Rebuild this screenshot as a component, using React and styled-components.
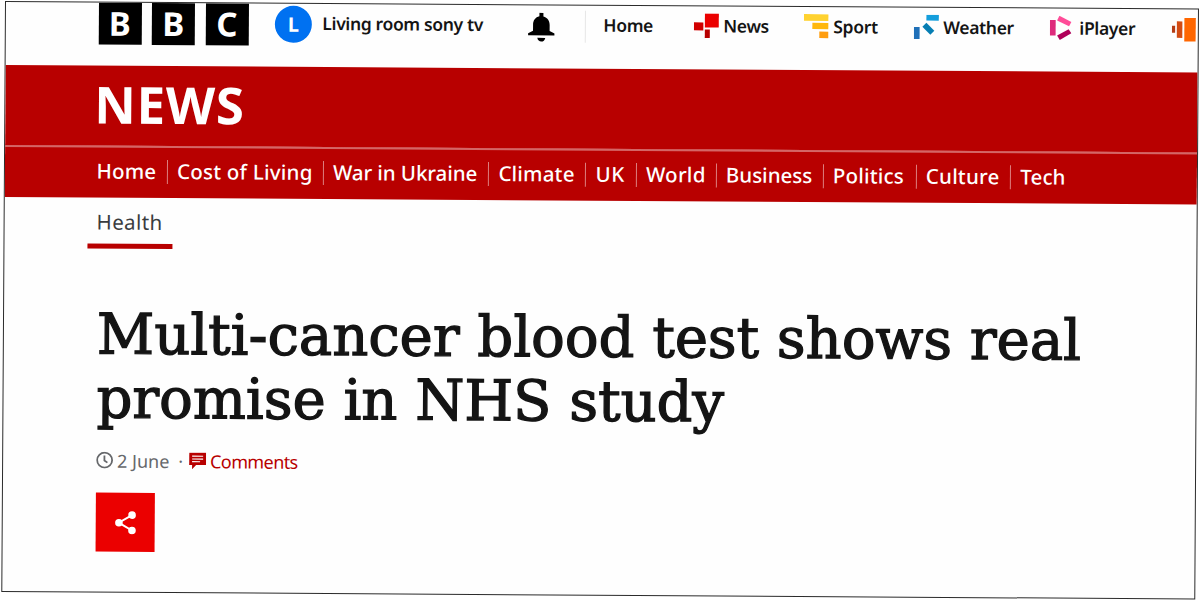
import styled, { createGlobalStyle } from 'styled-components';

const SERVICES = [
  { name: 'Home', width: 90 },
  { name: 'News', width: 110, icon: NewsIcon },
  { name: 'Sport', width: 110, icon: SportIcon },
  { name: 'Weather', width: 136, icon: WeatherIcon },
  { name: 'iPlayer', width: 122, icon: PlayerIcon },
];

const SECTIONS = [
  { name: 'Home', width: 70, tracking: 0.2 },
  { name: 'Cost of Living', width: 156, tracking: 0.25 },
  { name: 'War in Ukraine', width: 165.5, tracking: -0.05 },
  { name: 'Climate', width: 97, tracking: 0.2 },
  { name: 'UK', width: 50.5, tracking: 0.8 },
  { name: 'World', width: 80, tracking: 0.3 },
  { name: 'Business', width: 107, tracking: 0 },
  { name: 'Politics', width: 93, tracking: 0.2 },
  { name: 'Culture', width: 94.5, tracking: 0.2 },
  { name: 'Tech', width: 60, tracking: 0.1 },
];

export default function App() {
  return (
    <>
      <GlobalStyle />
      <Frame>
        <TopBar>
          <Brand>
            <BrandBlock>B</BrandBlock>
            <BrandBlock>B</BrandBlock>
            <BrandBlock>C</BrandBlock>
          </Brand>
          <Account>
            <Avatar>L</Avatar>
            <AccountName>Living room sony tv</AccountName>
          </Account>
          <Notifications>
            <BellIcon />
          </Notifications>
          <Services>
            {SERVICES.map(({ name, width, icon: Icon }) => (
              <Service key={name} $width={width}>
                {Icon && (
                  <ServiceIcon>
                    <Icon />
                  </ServiceIcon>
                )}
                {name}
              </Service>
            ))}
            <SoundsIcon />
          </Services>
        </TopBar>
        <Masthead>NEWS</Masthead>
        <SectionNav>
          {SECTIONS.map(({ name, width, tracking }) => (
            <Section key={name} $width={width} $tracking={tracking}>
              {name}
            </Section>
          ))}
        </SectionNav>
        <Article>
          <Topic>Health</Topic>
          <Headline>
            <span>Multi-cancer blood test shows real</span>
            <span>promise in NHS study</span>
          </Headline>
          <Meta>
            <ClockIcon />
            <PostDate>2 June</PostDate>
            <Dot>·</Dot>
            <CommentIcon />
            <Comments>Comments</Comments>
          </Meta>
          <ShareButton aria-label="Share">
            <ShareIcon />
          </ShareButton>
        </Article>
      </Frame>
    </>
  );
}

function BellIcon() {
  return (
    <svg width="27" height="30" viewBox="0 0 27 30">
      <path
        d="M11.5 0.500h4v3.500c4 1 6.300 4 6.300 8.500v6l4.900 2.500v2H.3v-2l4.900-2.500v-6C5.200 8 7.500 5 11.500 4z"
        fill="#000"
      />
      <path d="M9.500 25.500h8c-.5 2.500-2 3.700-4 3.700s-3.500-1.200-4-3.700z" fill="#000" />
    </svg>
  );
}

function NewsIcon() {
  return (
    <svg width="25" height="25" viewBox="0 0 25 25">
      <rect x="11" y="0" width="14" height="14" fill="#eb0000" />
      <rect x="0" y="9" width="9.500" height="8" fill="#d10000" />
      <rect x="11" y="16" width="5" height="8.500" fill="#b80000" />
    </svg>
  );
}

function SportIcon() {
  return (
    <svg width="25" height="25" viewBox="0 0 25 25">
      <rect x="0" y="0" width="24.500" height="6.800" fill="#ffd230" />
      <rect x="8.500" y="8.800" width="16" height="6.200" fill="#ffb80c" />
      <rect x="15.500" y="17.500" width="9" height="6.500" fill="#ff9e0f" />
    </svg>
  );
}

function WeatherIcon() {
  return (
    <svg width="25" height="25" viewBox="0 0 25 25">
      <rect x="12.500" y="0" width="12.500" height="5.800" fill="#149edc" />
      <path d="M12.500 8l8 8-4 4L8.500 12z" fill="#067eb3" />
      <rect x="0" y="12.200" width="5.800" height="12" fill="#1f70b8" />
    </svg>
  );
}

function PlayerIcon() {
  return (
    <svg width="22" height="25" viewBox="0 0 22 25">
      <rect x="0" y="4.500" width="5.800" height="15.500" fill="#de2b7c" />
      <path d="M9.500 0l12 6.300-2.300 4.200L7.200 4.800z" fill="#ff4c98" />
      <path d="M21.500 17.500L10 24.300 7.300 20l11.500-6.500z" fill="#b0005a" />
    </svg>
  );
}

function SoundsIcon() {
  return (
    <svg width="24" height="25" viewBox="0 0 24 25">
      <rect x="0" y="8.500" width="3.300" height="7" fill="#b33c15" />
      <rect x="5" y="4" width="5.500" height="16.500" fill="#d34b12" />
      <rect x="12.500" y="0.500" width="11.500" height="23.500" fill="#ff6600" />
    </svg>
  );
}

function ClockIcon() {
  return (
    <svg width="17" height="17" viewBox="0 0 17 17" fill="none" stroke="#66686b" strokeWidth="1.800">
      <circle cx="8.500" cy="8.500" r="7.500" />
      <path d="M8.300 3.800v5l3 2.200" />
    </svg>
  );
}

function CommentIcon() {
  return (
    <svg width="17" height="17" viewBox="0 0 17 17">
      <path d="M0 .5h17v12.300H7L3 17v-4.200H0z" fill="#b80000" />
      <path d="M3 4h11M3 6.800h11M3 9.500h8" stroke="#fff" strokeWidth="1.200" />
    </svg>
  );
}

function ShareIcon() {
  return (
    <svg width="22" height="24" viewBox="0 0 22 24">
      <path d="M17.300 4.300L4 12l13.300 7.700" fill="none" stroke="#fff" strokeWidth="2" />
      <circle cx="17.300" cy="4.300" r="3.800" fill="#fff" />
      <circle cx="4.200" cy="12" r="3.800" fill="#fff" />
      <circle cx="17.300" cy="19.700" r="3.800" fill="#fff" />
    </svg>
  );
}

const GlobalStyle = createGlobalStyle`
  * {
    box-sizing: border-box;
  }

  body {
    height: 100vh;
    margin: 0;
    overflow: hidden;
    background: #fff;
    font-family: 'Noto Sans', 'Open Sans', sans-serif;
  }

  #root {
    display: flow-root;
    height: 100%;
  }

  svg {
    display: block;
    flex-shrink: 0;
  }
`;

/* the sheet lies slightly turned on the page */
const Frame = styled.main`
  width: 1193.5px;
  height: 591px;
  margin: 1px 0 0 5px;
  overflow: hidden;
  border: 1px solid #2b2b2b;
  background: #fefefe;
  transform: rotate(0.36deg);
  transform-origin: 0 0;
`;

const TopBar = styled.header`
  display: flex;
  align-items: center;
  height: 63px;
  padding: 0 0 22px 92.500px;
`;

const Brand = styled.div`
  display: flex;
  gap: 10.500px;
  width: 176.500px;
`;

const BrandBlock = styled.span`
  display: flex;
  justify-content: center;
  align-items: center;
  width: 43px;
  height: 42px;
  background: #000;
  color: #fff;
  font-size: 33px;
  font-weight: 700;
  line-height: 41px;
`;

const Account = styled.div`
  display: flex;
  align-items: center;
  gap: 10.500px;
  width: 253px;
`;

const Avatar = styled.span`
  width: 37px;
  height: 37px;
  border-radius: 50%;
  background: #0071f1;
  color: #fff;
  font-size: 20px;
  font-weight: 700;
  line-height: 37px;
  text-align: center;
`;

const AccountName = styled.span`
  padding-bottom: 3px;
  color: #141414;
  font-size: 17.500px;
  font-weight: 600;
  letter-spacing: -0.350px;
  white-space: nowrap;
`;

const Notifications = styled.div`
  width: 57px;
  padding-top: 2px;
`;

const Services = styled.nav`
  display: flex;
  align-items: center;
  height: 32px;
  padding-left: 17.500px;
  border-left: 1px solid #e6e6e6;
`;

const Service = styled.a`
  display: flex;
  flex-shrink: 0;
  align-items: center;
  width: ${({ $width }) => $width}px;
  padding-bottom: 3px;
  color: #141414;
  font-size: 17.500px;
  font-weight: 600;
  letter-spacing: -0.350px;
`;

const ServiceIcon = styled.span`
  width: 30px;
`;

const Masthead = styled.div`
  height: 80px;
  padding-left: 89px;
  background: #b80000;
  color: #fff;
  font-size: 51px;
  font-weight: 700;
  letter-spacing: 0.700px;
  line-height: 76px;
`;

const SectionNav = styled.nav`
  display: flex;
  align-items: center;
  height: 51.500px;
  padding: 0 0 1px 91.500px;
  border-top: 2px solid #d46666;
  background: #b80000;
`;

const Section = styled.a`
  flex-shrink: 0;
  width: ${({ $width }) => $width}px;
  height: 24px;
  color: #fff;
  font-size: 20.500px;
  font-weight: 500;
  letter-spacing: ${({ $tracking }) => $tracking}px;
  line-height: 22px;
  white-space: nowrap;

  & + & {
    padding-left: 9.500px;
    border-left: 1px solid #dc7f7f;
  }
`;

const Article = styled.article`
  padding-left: 93px;
`;

const Topic = styled.div`
  width: 85px;
  height: 51px;
  margin-left: -10px;
  padding-left: 9px;
  border-bottom: 5px solid #b80000;
  color: #3a3c3e;
  font-size: 20.500px;
  letter-spacing: 0.400px;
  line-height: 49px;
`;

const Headline = styled.h1`
  display: flex;
  flex-direction: column;
  margin: 54px 0 0;
  color: #141414;
  font-family: 'DejaVu Serif', serif;
  font-size: 56px;
  font-weight: 400;
  line-height: 64px;
  white-space: nowrap;
  -webkit-text-stroke: 1.300px #141414;
`;

const Meta = styled.div`
  display: flex;
  align-items: center;
  height: 24px;
  margin-top: 18px;
  font-size: 18px;
`;

const PostDate = styled.span`
  width: 59px;
  padding-left: 4px;
  color: #66686b;
`;

const Dot = styled.span`
  width: 17px;
  text-align: center;
  color: #66686b;
`;

const Comments = styled.a`
  padding-left: 4px;
  color: #b80000;
  letter-spacing: -0.600px;
`;

const ShareButton = styled.button`
  display: flex;
  justify-content: center;
  align-items: center;
  width: 59px;
  height: 59px;
  margin-top: 20.500px;
  padding: 0;
  border: 0;
  background: #eb0000;
`;
